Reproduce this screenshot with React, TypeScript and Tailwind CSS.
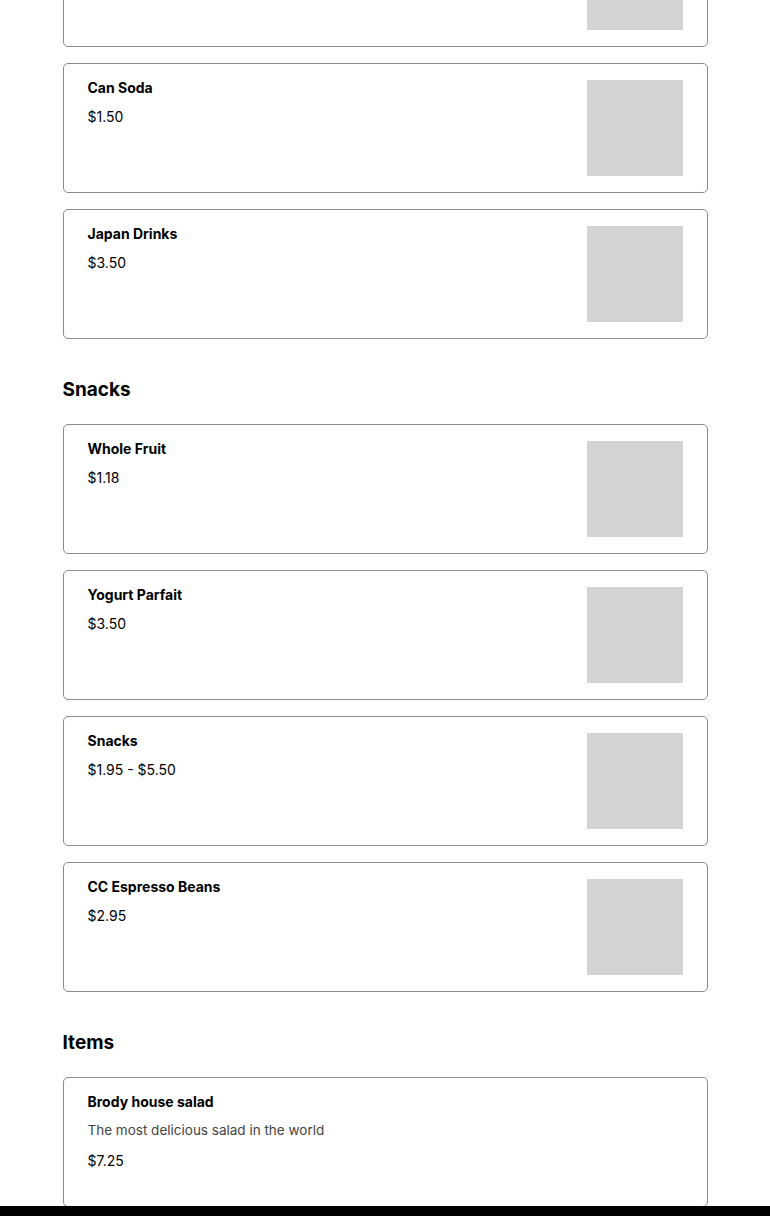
import React from "react";

interface IMenuItem {
  name: string;
  price: string;
  description?: string;
  image?: boolean;
}

interface ISection {
  title?: string;
  items: IMenuItem[];
}

const sections: ISection[] = [
  {
    items: [
      { name: "Bottled Water", price: "$1.50", image: true },
      { name: "Can Soda", price: "$1.50", image: true },
      { name: "Japan Drinks", price: "$3.50", image: true }
    ]
  },
  {
    title: "Snacks",
    items: [
      { name: "Whole Fruit", price: "$1.18", image: true },
      { name: "Yogurt Parfait", price: "$3.50", image: true },
      { name: "Snacks", price: "$1.95 - $5.50", image: true },
      { name: "CC Espresso Beans", price: "$2.95", image: true }
    ]
  },
  {
    title: "Items",
    items: [
      {
        name: "Brody house salad",
        description: "The most delicious salad in the world",
        price: "$7.25"
      }
    ]
  }
];

const MenuCard: React.FC<{ item: IMenuItem }> = ({ item }) => {
  return (
    <div className="flex h-[130px] justify-between rounded-[5px] border border-[#8c8c8c] bg-white py-4 px-6">
      <div className="flex flex-col">
        <h3 className="text-[14px] font-bold leading-[16px] text-black">
          {item.name}
        </h3>
        {item.description && (
          <p className="mt-[12px] text-[13.5px] leading-[16px] text-[#444]">
            {item.description}
          </p>
        )}
        <p
          className={
            "text-[14px] leading-[16px] text-black " +
            (item.description ? "mt-[15px]" : "mt-[13px]")
          }
        >
          {item.price}
        </p>
      </div>
      {item.image && <div className="h-24 w-24 shrink-0 bg-[#d3d3d3]" />}
    </div>
  );
};

export default function App() {
  return (
    <div
      className="min-h-screen bg-white"
      style={{ fontFamily: "Inter, 'Open Sans', sans-serif" }}
    >
      <div className="mx-auto -mt-[83px] max-w-[645px]">
        {sections.map((section, i) => (
          <section key={i}>
            {section.title && (
              <h2 className="mt-[37px] mb-[20px] text-[19px] font-bold leading-[28px] text-black">
                {section.title}
              </h2>
            )}
            <div className="flex flex-col gap-4">
              {section.items.map(item => (
                <MenuCard key={item.name} item={item} />
              ))}
            </div>
          </section>
        ))}
      </div>
      <div className="fixed bottom-0 left-0 right-0 h-[10px] bg-black" />
    </div>
  );
}
